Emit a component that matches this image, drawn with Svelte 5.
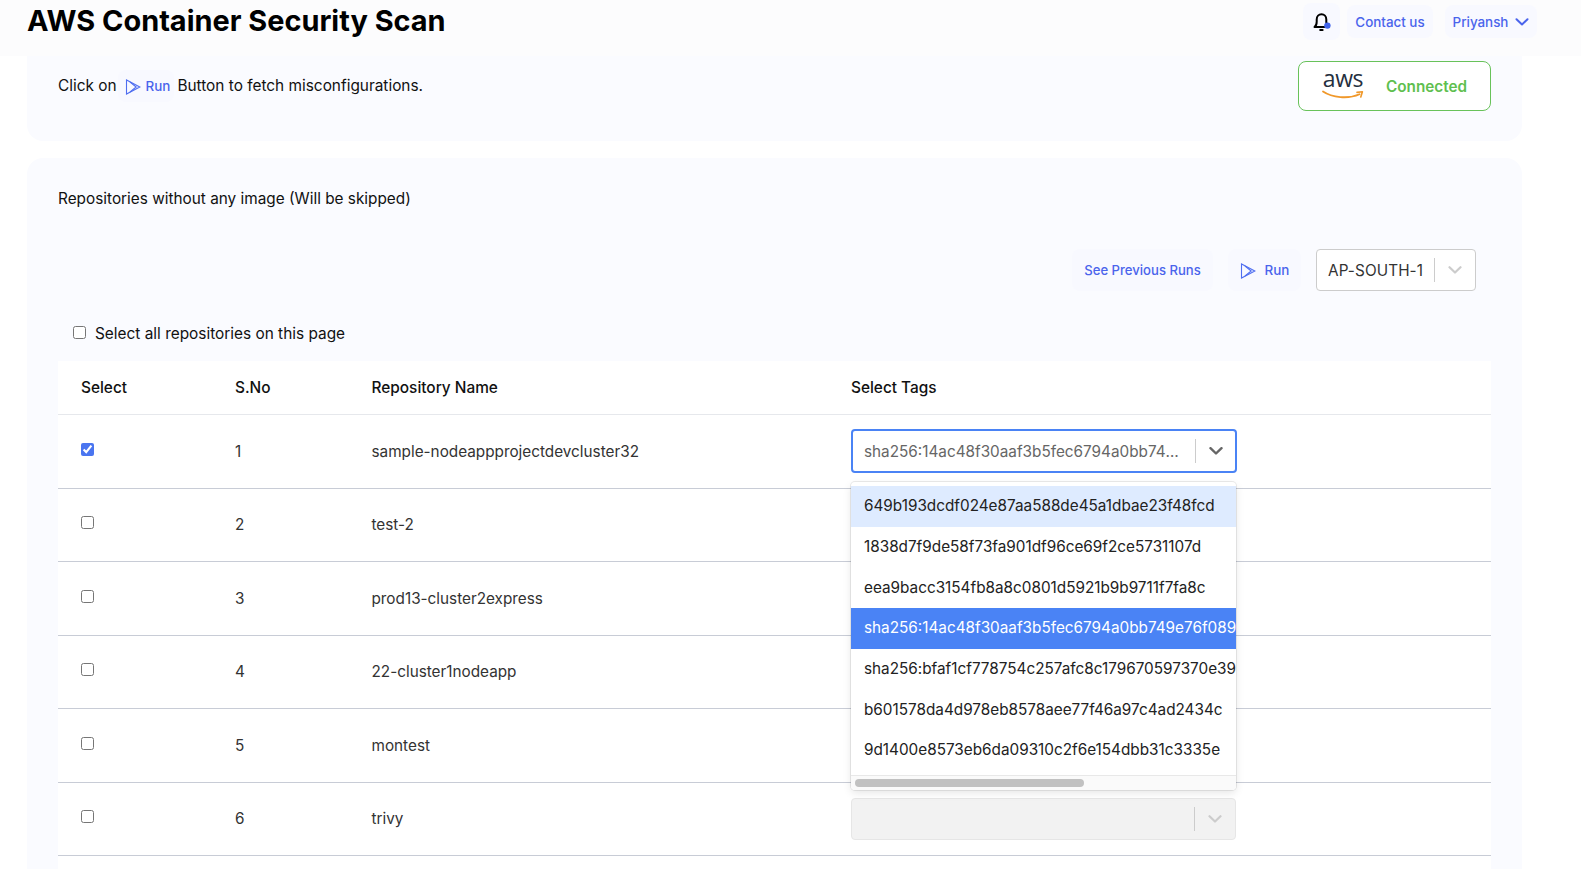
<script>
  const rows = [
    { n: 1, name: 'sample-nodeappprojectdevcluster32', active: true },
    { n: 2, name: 'test-2' },
    { n: 3, name: 'prod13-cluster2express' },
    { n: 4, name: '22-cluster1nodeapp' },
    { n: 5, name: 'montest' },
    { n: 6, name: 'trivy' }
  ];
  const options = [
    '649b193dcdf024e87aa588de45a1dbae23f48fcd',
    '1838d7f9de58f73fa901df96ce69f2ce5731107d',
    'eea9bacc3154fb8a8c0801d5921b9b9711f7fa8c',
    'sha256:14ac48f30aaf3b5fec6794a0bb749e76f0893c1d2e',
    'sha256:bfaf1cf778754c257afc8c179670597370e39a1f2c',
    'b601578da4d978eb8578aee77f46a97c4ad2434c',
    '9d1400e8573eb6da09310c2f6e154dbb31c3335e'
  ];
</script>

{#snippet playIcon()}
  <svg class="play" viewBox="0 0 16 16" width="16" height="16" fill="none" stroke="#4f6ef0" stroke-width="1.1">
    <path d="M1.5 1 L1.5 15 L14.8 8 Z" />
    <path d="M5 3 L11.2 8 L5 13" />
  </svg>
{/snippet}

{#snippet chevron(color, width)}
  <svg viewBox="0 0 14 8" width="14" height="8" fill="none" stroke={color} stroke-width={width} stroke-linecap="round" stroke-linejoin="round">
    <path d="M1.5 1.2 L7 6.5 L12.5 1.2" />
  </svg>
{/snippet}

<div class="page">
  <header class="topbar">
    <h1>AWS Container Security Scan</h1>
    <div class="actions">
      <button class="ghost bell" aria-label="Notifications">
        <svg viewBox="0 0 20 20" width="20" height="20" fill="none" stroke="#000" stroke-width="2" stroke-linejoin="round" stroke-linecap="round">
          <path d="M2.5 15 C4.3 13.8 4.7 12.2 4.7 9.8 L4.7 7.4 C4.7 4.4 6.8 2.2 9.5 2.2 C12.2 2.2 14.3 4.4 14.3 7.4 L14.3 9.8 C14.3 12.2 14.7 13.8 16.5 15 Z" />
          <path d="M8.2 18 L10.6 18" />
          <circle cx="15.4" cy="13.6" r="3.2" fill="#3f62ea" stroke="none" />
        </svg>
      </button>
      <button class="ghost contact">Contact us</button>
      <button class="ghost user">Priyansh {@render chevron('#4a64ec', 2)}</button>
    </div>
  </header>

  <section class="card intro">
    <p class="intro-text">
      <span>Click on</span>
      <span class="inline-run">{@render playIcon()}<span>Run</span></span>
      <span>Button to fetch misconfigurations.</span>
    </p>
    <div class="connected">
      <span class="aws">
        <span class="aws-word">aws</span>
        <svg viewBox="0 0 42 10" width="42" height="10" fill="none">
          <path d="M1 1.5 C10 7.6 26 9.4 37.5 4.2" stroke="#f0982a" stroke-width="1.8" stroke-linecap="round" />
          <path d="M35 2.4 L40.4 1.8 L38.8 7" stroke="#f0982a" stroke-width="1.6" stroke-linecap="round" stroke-linejoin="round" />
        </svg>
      </span>
      <span class="connected-label">Connected</span>
    </div>
  </section>

  <section class="card main">
    <p class="skipped">Repositories without any image (Will be skipped)</p>

    <div class="toolbar">
      <button class="ghost tool">See Previous Runs</button>
      <button class="ghost tool run">{@render playIcon()}<span>Run</span></button>
      <div class="region">
        <span class="region-value">AP-SOUTH-1</span>
        <span class="sep"></span>
        {@render chevron('#cccccc', 2.2)}
      </div>
    </div>

    <label class="select-all">
      <input type="checkbox" />
      <span>Select all repositories on this page</span>
    </label>

    <div class="table">
      <div class="row head">
        <div>Select</div>
        <div>S.No</div>
        <div>Repository Name</div>
        <div>Select Tags</div>
      </div>
      {#each rows as row}
        <div class="row">
          <div><input class="row-check" type="checkbox" checked={row.active} /></div>
          <div>{row.n}</div>
          <div>{row.name}</div>
          <div class="tag-cell">
            {#if row.active}
              <div class="tag-select focused">
                <span class="tag-value">sha256:14ac48f30aaf3b5fec6794a0bb749e76f0893c1d2e</span>
                <span class="sep"></span>
                {@render chevron('#666666', 2.4)}
              </div>
              <div class="menu">
                <div class="options">
                  {#each options as option, i}
                    <div class="option" class:hover={i === 0} class:selected={i === 3}>{option}</div>
                  {/each}
                </div>
                <div class="scrollbar"><div class="thumb"></div></div>
              </div>
            {:else}
              <div class="tag-select disabled">
                <span class="tag-value"></span>
                <span class="sep"></span>
                {@render chevron('#cccccc', 2.2)}
              </div>
            {/if}
          </div>
        </div>
      {/each}
    </div>
  </section>
</div>

<style>
  :global(body) {
    margin: 0;
    background: #fff;
    font-family: Inter, "Liberation Sans", sans-serif;
    overflow: hidden;
  }
  button {
    font-family: inherit;
    border: 0;
    cursor: pointer;
  }
  p, h1 {
    margin: 0;
  }
  .page {
    height: 869px;
    overflow: hidden;
    display: flex;
    flex-direction: column;
    color: #111;
  }
  .topbar {
    height: 56px;
    flex: none;
    background: #fcfcfd;
    display: flex;
    justify-content: space-between;
    align-items: flex-start;
    padding: 0 44px 0 27px;
    box-sizing: border-box;
  }
  h1 {
    font-size: 28.9px;
    line-height: 42px;
    font-weight: 700;
    color: #000;
  }
  .actions {
    display: flex;
    align-items: center;
    padding-top: 3px;
  }
  .ghost {
    background: #f8f9ff;
    color: #4a64ec;
    font-size: 13.4px;
    font-weight: 500;
    border-radius: 8px;
  }
  .bell {
    width: 37px;
    height: 37px;
    padding: 0;
    display: flex;
    align-items: center;
    justify-content: center;
    margin-right: 7px;
  }
  .contact {
    width: 86px;
    height: 33px;
    padding: 0;
    margin-right: 12px;
  }
  .user {
    width: 92px;
    height: 33px;
    padding: 0;
    display: flex;
    align-items: center;
    justify-content: center;
    gap: 7px;
  }
  .card {
    background: #fafbff;
    margin: 0 59px 0 27px;
    flex: none;
  }
  .intro {
    height: 85px;
    border-radius: 0 0 16px 16px;
    box-sizing: border-box;
    padding: 5px 31px 0;
    display: flex;
    justify-content: space-between;
    align-items: flex-start;
  }
  .intro-text {
    display: flex;
    align-items: center;
    font-size: 15.4px;
    line-height: 24px;
    margin-top: 9px;
  }
  .inline-run {
    display: inline-flex;
    align-items: center;
    gap: 5px;
    height: 32px;
    padding: 0 4px 0 7px;
    margin: 0 3px 0 1px;
    border-radius: 8px;
    background: #f8f9ff;
    color: #4a64ec;
    font-size: 13.4px;
    font-weight: 500;
  }
  .play {
    flex: none;
    position: relative;
    top: 1px;
  }
  .connected {
    width: 193px;
    height: 50px;
    box-sizing: border-box;
    background: #fff;
    border: 1px solid #68c25a;
    border-radius: 8px;
    display: flex;
    align-items: center;
    padding-left: 23px;
    gap: 22px;
  }
  .aws {
    display: flex;
    flex-direction: column;
    align-items: center;
    width: 42px;
    margin-top: -5px;
  }
  .aws-word {
    font-family: "Open Sans", sans-serif;
    font-size: 23px;
    line-height: 20px;
    height: 22px;
    color: #252f3e;
    letter-spacing: -0.4px;
  }
  .aws svg {
    display: block;
  }
  .connected-label {
    color: #5fbf50;
    font-size: 15.3px;
    font-weight: 600;
  }
  .main {
    margin-top: 17px;
    flex: 1;
    border-radius: 16px 16px 0 0;
    padding: 29px 31px 0;
  }
  .skipped {
    font-size: 15.35px;
    line-height: 24px;
  }
  .toolbar {
    display: flex;
    justify-content: flex-end;
    align-items: center;
    gap: 15px;
    margin-top: 38px;
    padding-right: 15px;
  }
  .tool {
    height: 42px;
    padding: 0;
    width: 141px;
    font-size: 13.1px;
  }
  .run {
    width: 73px;
    display: flex;
    align-items: center;
    justify-content: center;
    gap: 9px;
    font-size: 13.4px;
  }
  .region {
    width: 160px;
    height: 42px;
    box-sizing: border-box;
    background: #fff;
    border: 1px solid #ccc;
    border-radius: 4px;
    display: flex;
    align-items: center;
    padding: 0 13px 0 11px;
    font-size: 15.3px;
    color: #333;
    letter-spacing: 0.1px;
  }
  .region-value {
    flex: 1;
    white-space: nowrap;
  }
  .sep {
    width: 1px;
    height: 24px;
    background: #ccc;
    margin-right: 13px;
    flex: none;
  }
  .select-all {
    display: flex;
    align-items: center;
    gap: 9px;
    margin: 30px 0 0 15px;
    height: 24px;
    font-size: 15.4px;
  }
  .select-all input {
    position: relative;
    top: -1px;
  }
  input[type="checkbox"] {
    width: 13px;
    height: 13px;
    margin: 0;
    accent-color: #4a75f0;
  }
  .table {
    margin-top: 16px;
    background: #fff;
    min-height: 600px;
  }
  .row {
    display: grid;
    grid-template-columns: 154px 136.5px 479.5px 1fr;
    align-items: center;
    height: 73.5px;
    box-sizing: border-box;
    padding-left: 23px;
    border-bottom: 1px solid #c8ccd6;
    font-size: 15.3px;
    color: #333;
  }
  .row.head {
    height: 54px;
    border-bottom-color: #e6e8ec;
    color: #111;
    font-weight: 500;
    font-size: 15.4px;
  }
  .row-check {
    display: block;
    position: relative;
    top: -2px;
  }
  .tag-cell {
    position: relative;
    width: 385px;
  }
  .tag-select {
    height: 42px;
    box-sizing: border-box;
    border-radius: 4px;
    display: flex;
    align-items: center;
    padding: 0 13px 0 12px;
    background: #fff;
    border: 1px solid #ccc;
  }
  .tag-select.focused {
    border: 2px solid #4a83f5;
    height: 44px;
    width: 386px;
    padding-left: 11px;
    padding-right: 12px;
    color: #666;
  }
  .tag-select.disabled {
    background: #f2f2f2;
    border-color: #e6e6e6;
  }
  .tag-value {
    flex: 1;
    min-width: 0;
    white-space: nowrap;
    overflow: hidden;
    text-overflow: ellipsis;
    margin-right: 12px;
  }
  .menu {
    position: absolute;
    top: 53px;
    left: 0;
    width: 385px;
    height: 308px;
    box-sizing: border-box;
    background: #fff;
    border-radius: 4px;
    box-shadow: 0 0 0 1px rgba(0, 0, 0, 0.08), 0 3px 8px rgba(0, 0, 0, 0.1);
    z-index: 2;
    display: flex;
    flex-direction: column;
    overflow: hidden;
  }
  .options {
    flex: 1;
    padding-top: 4px;
    overflow: hidden;
  }
  .option {
    height: 40.7px;
    line-height: 40.7px;
    padding-left: 13px;
    white-space: nowrap;
    color: #222;
  }
  .option.hover {
    background: #deebff;
  }
  .option.selected {
    background: #4a83f5;
    color: #fff;
  }
  .scrollbar {
    height: 15px;
    flex: none;
    box-sizing: border-box;
    background: #fafafa;
    border-top: 1px solid #e8e8e8;
    padding: 3px 4px;
  }
  .thumb {
    width: 229px;
    height: 8px;
    background: #c1c1c1;
    border-radius: 4px;
  }
</style>
